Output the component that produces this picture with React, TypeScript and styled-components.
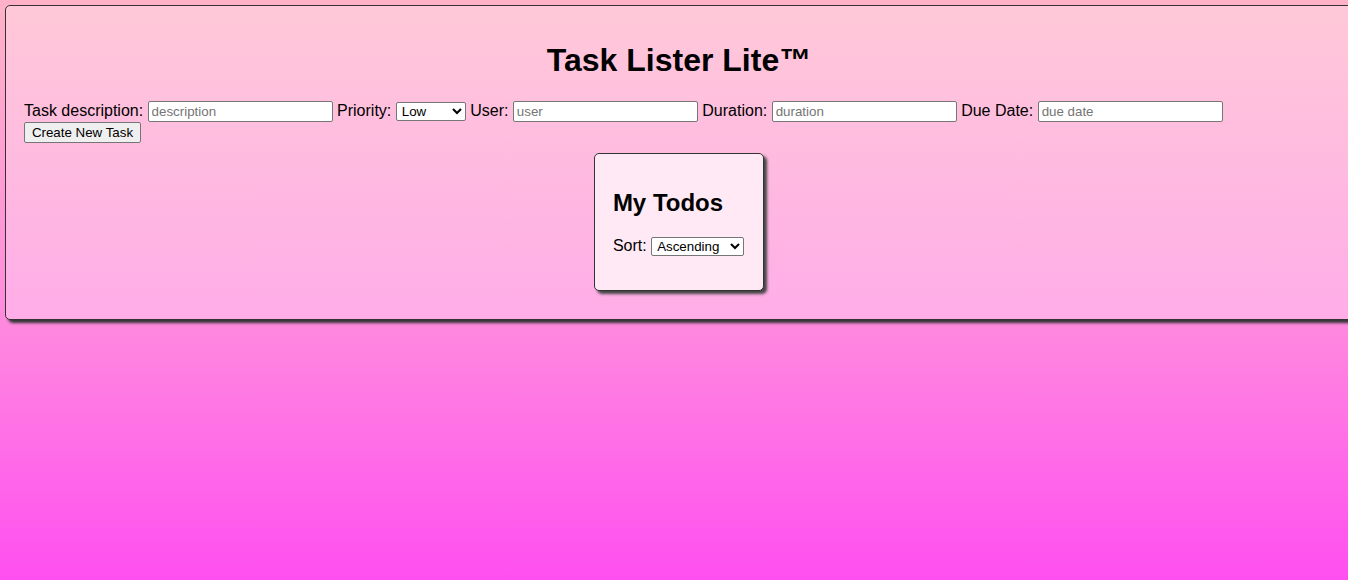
import React from "react";
import styled, { createGlobalStyle } from "styled-components";

const GlobalStyle = createGlobalStyle`
  html, body {
    margin: 0;
    padding: 0;
    overflow: hidden;
  }
  body {
    min-height: 580px;
    font-family: "Liberation Sans", Arial, sans-serif;
    font-size: 16px;
    color: #000;
    background: linear-gradient(to bottom, #ffb2c7 0%, #ff8ade 55%, #ff4ff0 100%);
    background-attachment: fixed;
  }
`;

const Page = styled.div`
  padding: 5px;
  height: 580px;
  box-sizing: border-box;
`;

const Panel = styled.section`
  box-sizing: content-box;
  width: 1310px;
  padding: 15px 18px 28px;
  border: 1px solid #333;
  border-radius: 5px;
  background: rgba(255, 255, 255, 0.3);
  box-shadow: 3px 3px 3px #333;
`;

const Title = styled.h1`
  margin: 21px 0 21px;
  text-align: center;
  font-size: 32px;
  font-weight: bold;
  line-height: 37px;
`;

const Form = styled.form`
  margin: 0;
  line-height: 21px;
`;

const Row = styled.div`
  display: block;
`;

const Label = styled.label`
  font-size: 16px;
`;

const TextInput = styled.input`
  box-sizing: border-box;
  width: 185px;
  height: 21px;
  padding: 1px 3px;
  border: 1px solid #767676;
  border-radius: 2px;
  background: #fff;
  font-family: "Liberation Sans", Arial, sans-serif;
  font-size: 13.33px;
  vertical-align: baseline;
  &::placeholder {
    color: #757575;
  }
`;

const Select = styled.select<{ $w: number }>`
  box-sizing: border-box;
  width: ${(p) => p.$w}px;
  height: 19px;
  border: 1px solid #767676;
  border-radius: 2px;
  background: #fff;
  color: #000;
  font-family: "Liberation Sans", Arial, sans-serif;
  font-size: 13.33px;
  padding: 0 0 0 1px;
`;

const Button = styled.button`
  box-sizing: border-box;
  width: 117px;
  height: 21px;
  padding: 1px 6px;
  border: 1px solid #767676;
  border-radius: 2px;
  background: #efefef;
  color: #000;
  font-family: "Liberation Sans", Arial, sans-serif;
  font-size: 13.33px;
  vertical-align: top;
`;

const Center = styled.div`
  display: flex;
  justify-content: center;
  margin-top: 10px;
`;

const TodoCard = styled.div`
  padding: 18px 19px 18px 18px;
  border: 1px solid #333;
  border-radius: 5px;
  background: #ffe9f5;
  box-shadow: 3px 3px 3px #444;
  height: 100px;
`;

const TodoTitle = styled.h2`
  margin: 17px 0 19px;
  font-size: 24px;
  font-weight: bold;
  line-height: 28px;
`;

const SortRow = styled.div`
  font-size: 16px;
  line-height: 20px;
`;

export default function App() {
  return (
    <>
      <GlobalStyle />
      <Page>
        <Panel>
          <Title>Task Lister Lite™</Title>
          <Form onSubmit={(e) => e.preventDefault()}>
            <Row>
              <Label>Task description: </Label>
              <TextInput placeholder="description" />{" "}
              <Label>Priority: </Label>
              <Select $w={70} defaultValue="low">
                <option value="low">Low</option>
                <option value="medium">Medium</option>
                <option value="high">High</option>
              </Select>{" "}
              <Label>User: </Label>
              <TextInput placeholder="user" />{" "}
              <Label>Duration: </Label>
              <TextInput placeholder="duration" />{" "}
              <Label>Due Date: </Label>
              <TextInput placeholder="due date" />
            </Row>
            <Row>
              <Button type="submit">Create New Task</Button>
            </Row>
          </Form>
          <Center>
            <TodoCard>
              <TodoTitle>My Todos</TodoTitle>
              <SortRow>
                Sort:{" "}
                <Select $w={93} defaultValue="asc">
                  <option value="asc">Ascending</option>
                  <option value="desc">Descending</option>
                </Select>
              </SortRow>
            </TodoCard>
          </Center>
        </Panel>
      </Page>
    </>
  );
}
